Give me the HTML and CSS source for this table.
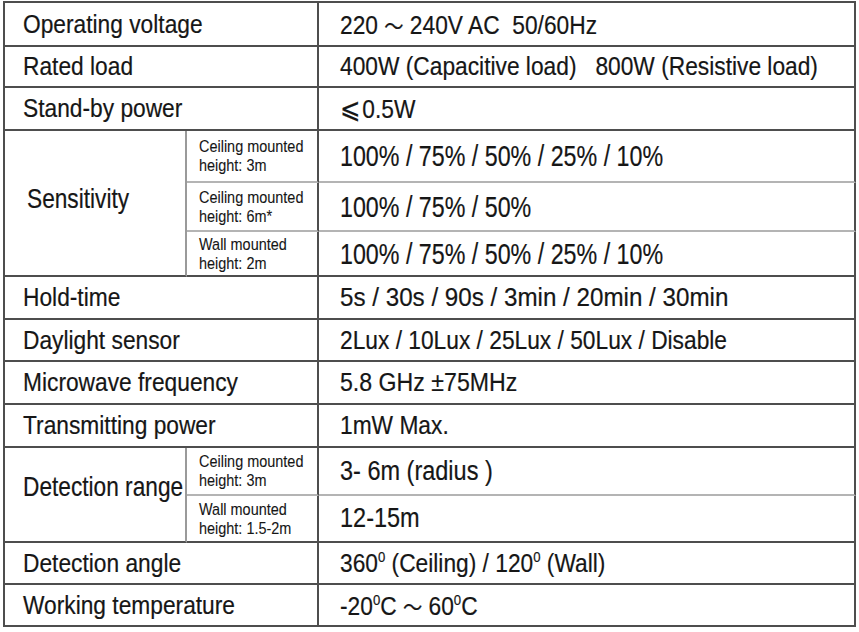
FILE: index.html
```html
<!DOCTYPE html>
<html>
<head>
<meta charset="utf-8">
<link rel="stylesheet" href="styles.css">
</head>
<body>
<div class="spec">
  <div class="cell label wide"><span class="t lbl">Operating voltage</span></div>
  <div class="cell value"><span class="t val">220 <span class="wave">～</span> 240V AC&nbsp; 50/60Hz</span></div>

  <div class="cell label wide"><span class="t lbl">Rated load</span></div>
  <div class="cell value"><span class="t val">400W (Capacitive load)&nbsp;&nbsp; 800W (Resistive load)</span></div>

  <div class="cell label wide"><span class="t lbl">Stand-by power</span></div>
  <div class="cell value"><span class="t val"><span class="leq">⩽</span>0.5W</span></div>

  <div class="cell label group sens"><span class="t grp">Sensitivity</span></div>
  <div class="cell sub inner"><span class="t small">Ceiling mounted<br>height: 3m</span></div>
  <div class="cell value inner"><span class="t big">100% / 75% / 50% / 25% / 10%</span></div>
  <div class="cell sub inner"><span class="t small">Ceiling mounted<br>height: 6m*</span></div>
  <div class="cell value inner"><span class="t big">100% / 75% / 50%</span></div>
  <div class="cell sub"><span class="t small">Wall mounted<br>height: 2m</span></div>
  <div class="cell value"><span class="t big">100% / 75% / 50% / 25% / 10%</span></div>

  <div class="cell label wide"><span class="t lbl">Hold-time</span></div>
  <div class="cell value"><span class="t val hold">5s / 30s / 90s / 3min / 20min / 30min</span></div>

  <div class="cell label wide"><span class="t lbl">Daylight sensor</span></div>
  <div class="cell value"><span class="t val">2Lux / 10Lux / 25Lux / 50Lux / Disable</span></div>

  <div class="cell label wide"><span class="t lbl">Microwave frequency</span></div>
  <div class="cell value"><span class="t val freq">5.8 GHz ±75MHz</span></div>

  <div class="cell label wide"><span class="t lbl">Transmitting power</span></div>
  <div class="cell value"><span class="t val">1mW Max.</span></div>

  <div class="cell label group det"><span class="t grp">Detection range</span></div>
  <div class="cell sub inner"><span class="t small">Ceiling mounted<br>height: 3m</span></div>
  <div class="cell value inner"><span class="t mid">3- 6m (radius )</span></div>
  <div class="cell sub"><span class="t small">Wall mounted<br>height: 1.5-2m</span></div>
  <div class="cell value"><span class="t mid">12-15m</span></div>

  <div class="cell label wide"><span class="t lbl">Detection angle</span></div>
  <div class="cell value"><span class="t val">360<sup>0</sup> (Ceiling) / 120<sup>0</sup> (Wall)</span></div>

  <div class="cell label wide"><span class="t lbl">Working temperature</span></div>
  <div class="cell value"><span class="t val">-20<sup>0</sup>C <span class="wave">～</span> 60<sup>0</sup>C</span></div>
</div>
</body>
</html>
```

FILE: styles.css
```css
html, body {
  margin: 0;
  padding: 0;
  background: #ffffff;
}

body {
  padding: 1px 0 0 3px;
  font-family: "Liberation Sans", Arial, sans-serif;
  color: #161616;
}

.spec {
  display: grid;
  width: 853px;
  box-sizing: border-box;
  grid-template-columns: 182px 132px 537px;
  grid-template-rows: 44px 41px 43px 52px 49px 45px 43px 42px 43px 43px 48px 47px 42px 42px;
  border-top: 2px solid #4e4e4e;
  border-left: 2px solid #4e4e4e;
}

.cell {
  box-sizing: border-box;
  border-right: 2px solid #4e4e4e;
  border-bottom: 2px solid #4e4e4e;
  display: flex;
  align-items: center;
  overflow: hidden;
  white-space: nowrap;
}

.label {
  padding-left: 18px;
}

.wide {
  grid-column: span 2;
}

.group {
  border-right: 2px solid #9a9a9a;
  padding-left: 22px;
}

.sens {
  grid-row: span 3;
  padding-bottom: 8px;
}

.det {
  grid-row: span 2;
  padding-left: 18px;
  padding-bottom: 16px;
}

.sub {
  padding-left: 12px;
}

.value {
  padding-left: 21px;
}

.inner {
  border-bottom: 2px solid #b4b4b4;
}

.t {
  display: inline-block;
  transform-origin: left center;
  -webkit-text-stroke: 0.2px #161616;
}

.lbl {
  font-size: 26px;
  transform: scaleX(0.875);
}

.val {
  font-size: 26px;
  transform: scaleX(0.875);
}

.val.hold {
  transform: scaleX(0.93);
}

.val.freq {
  transform: scaleX(0.89);
}

.big {
  font-size: 30px;
  transform: scaleX(0.775);
}

.mid {
  font-size: 27px;
  transform: scaleX(0.87);
}

.grp {
  font-size: 28px;
  transform: scaleX(0.81);
}

.small {
  font-size: 17px;
  line-height: 19px;
  transform: scaleX(0.85);
  -webkit-text-stroke: 0.1px #161616;
}

.wave {
  font-family: "Noto Sans CJK SC", "DejaVu Sans", sans-serif;
  font-size: 22px;
}

.leq {
  font-family: "DejaVu Sans", sans-serif;
  font-size: 28px;
  margin-right: 2px;
}

sup {
  font-size: 15px;
  vertical-align: 10px;
  line-height: 0;
}
```
